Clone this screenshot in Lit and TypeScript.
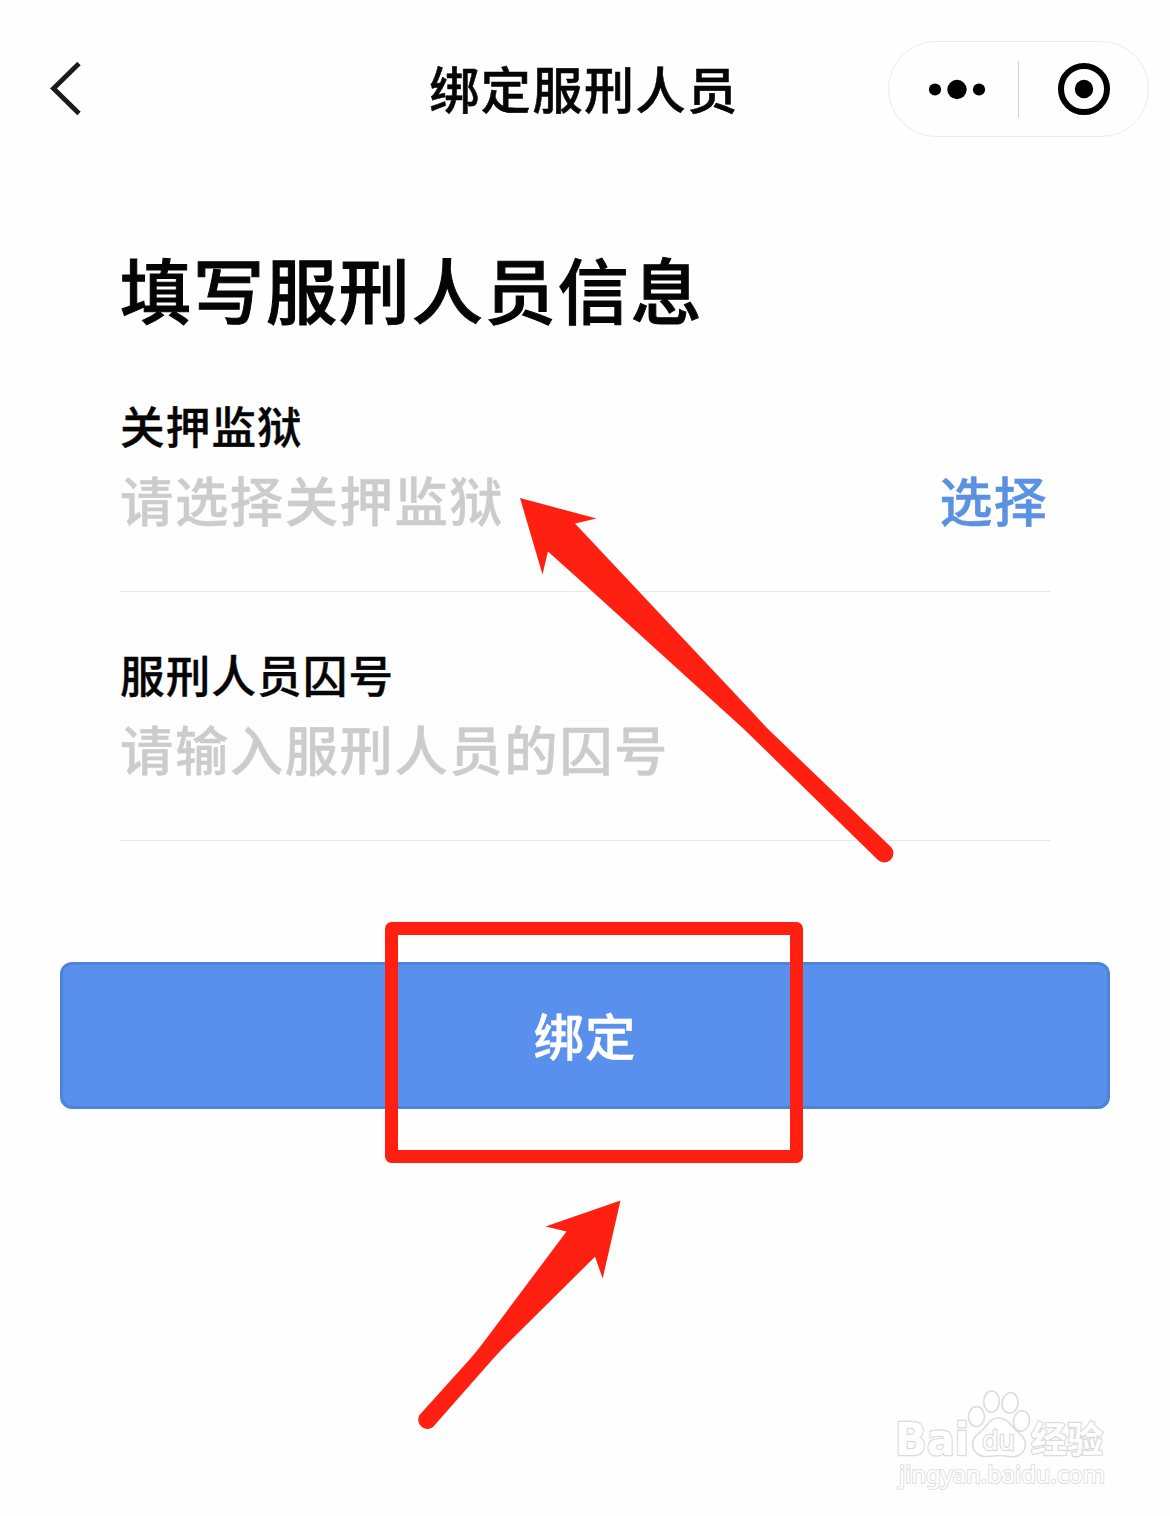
import { LitElement, html, svg, css } from "lit";
import { customElement, property } from "lit/decorators.js";

@customElement("nav-header")
class NavHeader extends LitElement {
  @property() title = "";
  static styles = css`
    :host { display: block; }
    .bar { display: grid; grid-template-columns: 281px 1fr 281px; align-items: center; height: 178px; }
    .back { display: block; margin-left: 48px; }
    .title { margin: 0; padding: 0 2px 5px 0; text-align: center; font-size: 50px; letter-spacing: 1.6px; line-height: 76px; font-weight: 500; color: #060606; -webkit-text-stroke: 0.6px #060606; white-space: nowrap; }
    .capsule { box-sizing: border-box; width: 261px; height: 96px; margin-left: -1px; border: 1px solid #ebebeb; border-radius: 48px; display: grid; grid-template-columns: 129px 1px 1fr; align-items: center; }
    .half { display: flex; justify-content: center; }
    .dots { padding-left: 7px; }
    .line { height: 57px; background: #cfcfcf; }
  `;
  render() {
    return html`<header class="bar">
      <svg class="back" width="36" height="60" viewBox="0 0 36 60" fill="none" stroke="#1b1b1b" stroke-width="4.8">
        <path d="M31 4.5 5.5 29.5 31 54.5" />
      </svg>
      <h1 class="title">${this.title}</h1>
      <div class="capsule">
        <div class="half dots">
          <svg width="58" height="22" viewBox="0 0 58 22"><circle cx="7" cy="11.5" r="6.1" /><circle cx="29" cy="11.5" r="9.7" /><circle cx="51" cy="11.5" r="6.1" /></svg>
        </div>
        <div class="line"></div>
        <div class="half">
          <svg width="54" height="54" viewBox="0 0 54 54"><circle cx="27" cy="27" r="23" fill="none" stroke="#000" stroke-width="6" /><circle cx="27" cy="27" r="9.2" /></svg>
        </div>
      </div>
    </header>`;
  }
}

@customElement("form-field")
class FormField extends LitElement {
  @property() label = "";
  @property() hint = "";
  @property() action = "";
  static styles = css`
    :host { display: block; }
    .field { box-sizing: border-box; height: 249px; border-bottom: 1px solid #e8e8e8; padding-top: 51px; }
    .label { font-size: 44.6px; letter-spacing: 1.1px; line-height: 62px; font-weight: 500; color: #050505; -webkit-text-stroke: 0.4px #050505; }
    .row { display: flex; justify-content: space-between; align-items: center; height: 86px; line-height: 80px; }
    .hint { font-size: 53.4px; letter-spacing: 1.5px; font-weight: 500; color: #cccccc; -webkit-text-stroke: 0.4px #cccccc; }
    .action { font-size: 53px; letter-spacing: 1.2px; font-weight: 500; color: #5a91e2; -webkit-text-stroke: 0.5px #5a91e2; padding-right: 2px; }
  `;
  render() {
    return html`<div class="field">
      <div class="label">${this.label}</div>
      <div class="row"><span class="hint">${this.hint}</span><span class="action">${this.action}</span></div>
    </div>`;
  }
}

@customElement("site-mark")
class SiteMark extends LitElement {
  static styles = css`
    :host { display: block; }
    .mark { display: block; }
    .ink { fill: #fff; stroke: #dadada; stroke-width: 2.4px; paint-order: stroke; stroke-linejoin: round; }
    .thin { stroke-width: 2px; stroke: #e0e0e0; }
    .latin { font-family: "DejaVu Sans", sans-serif; font-weight: 700; }
    .du { font-family: "DejaVu Sans", sans-serif; font-weight: 400; }
    .cjk { font-family: "Noto Sans CJK SC", sans-serif; font-weight: 700; }
    .url { font-family: "Noto Sans", sans-serif; font-weight: 400; }
    .paw { fill: #fff; stroke: #dcdcdc; stroke-width: 1.6px; }
  `;
  render() {
    const toes = [[106.5, 46.5, 8, 10, 0], [121.5, 31.5, 7.8, 10.5, 0], [140, 33, 8, 10.3, 8], [151.5, 51, 8, 10.3, 8]];
    return html`<svg class="mark" width="260" height="140" viewBox="0 0 260 140">
      <text class="ink latin" x="25" y="85" font-size="45" textLength="74" lengthAdjust="spacingAndGlyphs">Bai</text>
      ${toes.map(([x, y, rx, ry, a]) => svg`<ellipse class="paw" cx=${x} cy=${y} rx=${rx} ry=${ry} transform="rotate(${a} ${x} ${y})" />`)}
      <path class="paw" d="M128.5 48c-8 0-10.500 6-14.500 10.500s-11.500 8-11.500 15.500c0 7 6 12.500 13 12.500 6 0 8-1 13.500-1s8 1.200 14 1.200c7 0 12.500-5.500 12.500-12.500 0-7.500-7-11-11.500-16s-7.500-10.200-15.500-10.200z" />
      <text class="ink du" x="112" y="80" font-size="27" textLength="33" lengthAdjust="spacingAndGlyphs">du</text>
      <text class="ink cjk" x="161" y="83" font-size="36" textLength="72" lengthAdjust="spacingAndGlyphs">经验</text>
      <text class="ink thin url" x="29" y="113" font-size="23.5" textLength="206" lengthAdjust="spacingAndGlyphs">jingyan.baidu.com</text>
    </svg>`;
  }
}

@customElement("app-root")
class AppRoot extends LitElement {
  static styles = css`
    :host { display: block; font-family: "Noto Sans CJK SC", sans-serif; }
    .page { position: relative; box-sizing: border-box; width: 1170px; height: 1516px; overflow: hidden; background: #fefefe; display: flex; flex-direction: column; }
    .form { padding: 58px 120px 0; }
    .heading { margin: 0; padding: 0 0 5px; font-size: 71px; letter-spacing: 1.95px; line-height: 102px; font-weight: 500; color: #050505; -webkit-text-stroke: 1px #050505; }
    .submit { box-sizing: border-box; margin: 121px 60px 0; height: 147px; padding: 0 0 3px; border: 3px solid #4d84d8; border-radius: 12px; background: #5990ed; color: #fff; font: inherit; font-size: 50.5px; letter-spacing: 1px; font-weight: 500; line-height: 76px; -webkit-text-stroke: 0.5px #fff; }
    .marks { position: absolute; inset: 0; pointer-events: none; fill: #ff2012; }
    .frame { fill: none; stroke: #ff2012; stroke-width: 13px; stroke-linejoin: round; }
    .brand { position: absolute; left: 870px; top: 1370px; }
  `;
  render() {
    return html`<main class="page">
      <nav-header title="绑定服刑人员"></nav-header>
      <section class="form">
        <h2 class="heading">填写服刑人员信息</h2>
        <form-field label="关押监狱" hint="请选择关押监狱" action="选择"></form-field>
        <form-field label="服刑人员囚号" hint="请输入服刑人员的囚号"></form-field>
      </section>
      <button class="submit">绑定</button>
      <site-mark class="brand"></site-mark>
      <svg class="marks" width="1170" height="1516" viewBox="0 0 1170 1516">
        <path d="M520 498 596.5 518.5 575 523.5 755 715Q762 723 770 731L891 847A9.2 9.2 0 0 1 878 860L752 737Q744 729 735 721L583 583 548 551.5 542.5 574.5Z" />
        <path d="M620.5 1200.5 602.7 1278.5 595 1256.7 508 1343Q500 1351 492 1360L433 1427A9.2 9.2 0 0 1 419.5 1415L470 1359Q477 1351 483 1343L566.5 1231.5 545.5 1226.5Z" />
        <rect class="frame" x="391.5" y="928.5" width="405" height="228" />
      </svg>
    </main>`;
  }
}
